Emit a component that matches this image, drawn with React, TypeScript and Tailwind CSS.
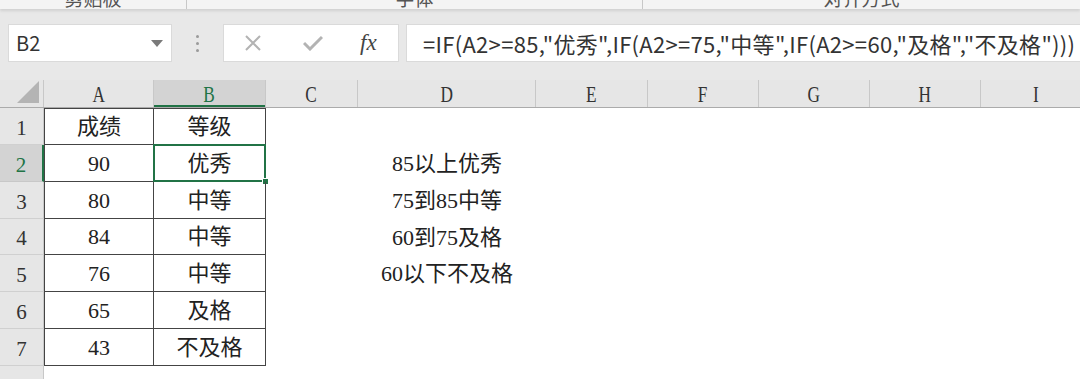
const cols = [
  { l: "A", w: 110 },
  { l: "B", w: 112 },
  { l: "C", w: 92 },
  { l: "D", w: 178 },
  { l: "E", w: 112 },
  { l: "F", w: 111 },
  { l: "G", w: 111 },
  { l: "H", w: 111 },
  { l: "I", w: 111 },
];

const rowHeights = [37, 37, 37, 36, 37, 37, 37];

const data = [
  ["成绩", "等级"],
  ["90", "优秀"],
  ["80", "中等"],
  ["84", "中等"],
  ["76", "中等"],
  ["65", "及格"],
  ["43", "不及格"],
];

const notes: Record<number, string> = {
  1: "85以上优秀",
  2: "75到85中等",
  3: "60到75及格",
  4: "60以下不及格",
};

function FormulaBar() {
  return (
    <div className="mt-[15px] flex h-[38px] items-stretch font-['Noto_Sans_CJK_SC',sans-serif]">
      {/* name box */}
      <div className="ml-[8px] flex w-[164px] items-center justify-between border border-[#dadada] bg-white pl-[7px] pr-[8px]">
        <span className="text-[20px] text-[#333]">B2</span>
        <svg width="12" height="7" viewBox="0 0 12 7">
          <path d="M0 0 L12 0 L6 7 Z" fill="#7a7a7a" />
        </svg>
      </div>
      <div className="flex w-[51px] flex-col items-center justify-center gap-[4px]">
        <span className="h-[3px] w-[3px] rounded-full bg-[#9a9a9a]" />
        <span className="h-[3px] w-[3px] rounded-full bg-[#9a9a9a]" />
        <span className="h-[3px] w-[3px] rounded-full bg-[#9a9a9a]" />
      </div>
      {/* cancel / enter / fx */}
      <div className="flex w-[176px] items-center border border-[#dadada] bg-white">
        <svg className="ml-[20px]" width="18" height="18" viewBox="0 0 18 18">
          <path d="M2 2 L16 16 M16 2 L2 16" stroke="#b3b3b3" strokeWidth="2" />
        </svg>
        <svg className="ml-[41px]" width="20" height="16" viewBox="0 0 20 16">
          <path d="M1 8 L7 14 L19 2" stroke="#b3b3b3" strokeWidth="3" fill="none" />
        </svg>
        <span className="ml-[37px] font-['Liberation_Serif',serif] text-[23px] italic text-[#444]">fx</span>
      </div>
      <div className="ml-[7px] flex flex-1 items-center overflow-hidden whitespace-nowrap border-y border-l border-[#dadada] bg-white pl-[16px] text-[22px] tracking-[0.3px] text-[#333]">
        =IF(A2&gt;=85,"优秀",IF(A2&gt;=75,"中等",IF(A2&gt;=60,"及格","不及格")))
      </div>
    </div>
  );
}

function Ribbon() {
  const groups = [
    { t: "剪贴板", w: 187 },
    { t: "字体", w: 456 },
    { t: "对齐方式", w: 437 },
  ];
  return (
    <div className="flex h-[9px] overflow-hidden bg-[#f4f4f4] font-['Noto_Sans_CJK_SC',sans-serif] shadow-[0_2px_3px_rgba(0,0,0,0.10)]">
      {groups.map((g, i) => (
        <div
          key={g.t}
          className={"flex shrink-0 justify-center " + (i < 2 ? "border-r border-[#c8c8c8]" : "")}
          style={{ width: g.w }}
        >
          <span className="-mt-[12px] text-[19px] leading-none text-[#555]">{g.t}</span>
        </div>
      ))}
    </div>
  );
}

function HeaderRow() {
  return (
    <div className="flex h-[28px] border-b border-[#ababab] bg-[#e6e6e6]">
      <div className="relative w-[44px] shrink-0 border-r border-[#c8c8c8]">
        <svg className="absolute bottom-[4px] right-[4px]" width="22" height="22" viewBox="0 0 22 22">
          <path d="M22 0 L22 22 L0 22 Z" fill="#b4b4b4" />
        </svg>
      </div>
      {cols.map((c) => {
        const sel = c.l === "B";
        return (
          <div
            key={c.l}
            className={
              "flex shrink-0 items-center justify-center border-r border-[#c8c8c8] " +
              (sel ? "bg-[#d3d3d3] text-[#217346] shadow-[inset_0_-2px_0_#217346]" : "text-[#333]")
            }
            style={{ width: c.w }}
          >
            <span className="inline-block scale-x-[0.72] text-[24px] leading-none">{c.l}</span>
          </div>
        );
      })}
    </div>
  );
}

export default function App() {
  return (
    <div className="h-[379px] w-[1080px] overflow-hidden bg-[#e8e8e8] font-['Liberation_Serif','Noto_Sans_CJK_SC',serif]">
      <Ribbon />
      <FormulaBar />
      <div className="mt-[18px] bg-white">
        <HeaderRow />
        {rowHeights.map((h, r) => {
          const sel = r === 1;
          return (
            <div key={r} className="flex" style={{ height: h }}>
              <div
                className={
                  "flex w-[44px] shrink-0 items-end justify-center border-b pb-[1px] " +
                  (sel
                    ? "border-b-[#c8c8c8] border-r-2 border-r-[#217346] bg-[#d3d3d3] text-[#217346]"
                    : "border-r border-b-[#d0d0d0] border-r-[#c8c8c8] bg-[#e6e6e6] text-[#333]")
                }
              >
                <span className="text-[21px] leading-[30px]">{r + 1}</span>
              </div>
              {cols.map((c, ci) => {
                const inTable = ci < 2;
                const text = inTable ? data[r][ci] : ci === 3 ? notes[r] : undefined;
                return (
                  <div
                    key={c.l}
                    className={
                      "relative flex shrink-0 items-center justify-center text-[22px] text-[#222]" +
                      (inTable ? " border-b border-r border-[#444]" : "") +
                      (inTable && r === 0 ? " border-t" : "") +
                      (inTable && ci === 0 ? " border-l" : "")
                    }
                    style={{ width: c.w }}
                  >
                    {text}
                    {inTable && ci === 1 && sel && (
                      <>
                        <div className="absolute -bottom-[1px] -left-[1px] -right-[1px] -top-[1px] border-2 border-[#217346]" />
                        <div className="absolute -bottom-[4px] -right-[4px] h-[7px] w-[7px] border border-white bg-[#217346]" />
                      </>
                    )}
                  </div>
                );
              })}
            </div>
          );
        })}
        <div className="flex h-[20px]">
          <div className="w-[44px] shrink-0 border-r border-[#c8c8c8] bg-[#e6e6e6]" />
        </div>
      </div>
    </div>
  );
}
